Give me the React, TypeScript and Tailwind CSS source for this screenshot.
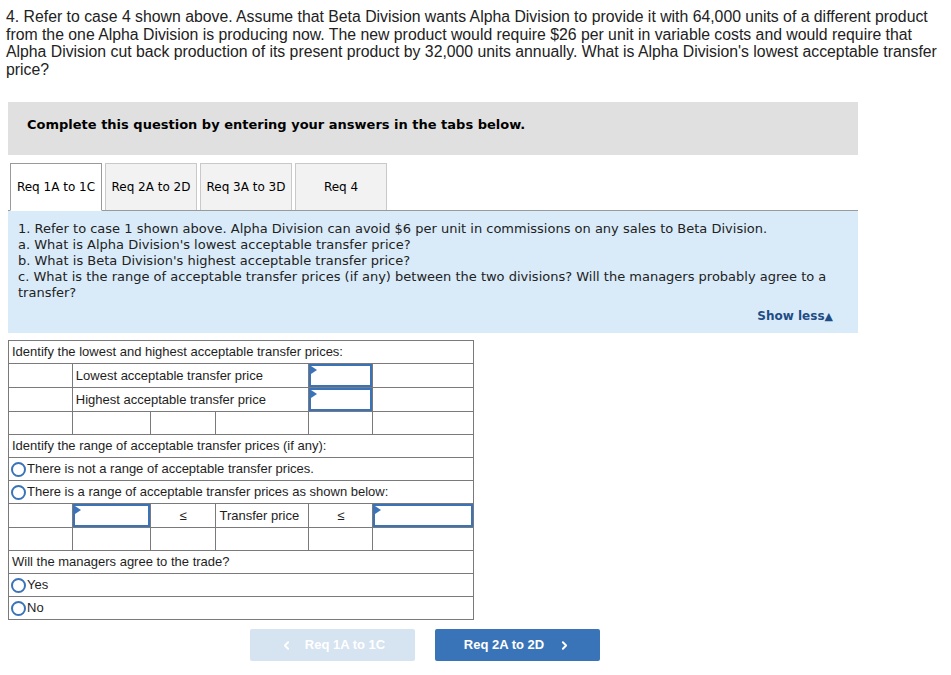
import type { ReactNode } from 'react';
import { ChevronLeft, ChevronRight } from 'lucide-react';

const tabs = ['Req 1A to 1C', 'Req 2A to 2D', 'Req 3A to 3D', 'Req 4'];

function AnswerBox() {
  return (
    <div className="relative h-[23px] w-full border-2 border-[#3b73b9] bg-white">
      <span className="absolute left-0 top-0 h-0 w-0 border-y-[4px] border-l-[6px] border-y-transparent border-l-[#3b73b9]" />
    </div>
  );
}

function Radio({ label }: { label: string }) {
  return (
    <div className="flex items-center">
      <span className="ml-[2px] mr-[1px] inline-block h-[15px] w-[15px] rounded-full border-2 border-[#3b73b9] bg-white" />
      <span>{label}</span>
    </div>
  );
}

function Cell({ children, className = '', colSpan }: { children?: ReactNode; className?: string; colSpan?: number }) {
  return (
    <td colSpan={colSpan} className={`h-[23px] border border-[#7a7a7a] p-0 ${className}`}>
      {children}
    </td>
  );
}

function EmptyRow() {
  return (
    <tr>
      <Cell />
      <Cell />
      <Cell />
      <Cell />
      <Cell />
      <Cell />
    </tr>
  );
}

export default function App() {
  return (
    <div className="min-h-[675px] w-[951px] bg-white text-[#1a1a1a]">
      <p className="px-[6px] pt-[8px] text-[15.8px] leading-[17.5px] text-[#222] [font-family:'Liberation_Sans',Arial,sans-serif]">
        <span className="whitespace-nowrap">4. Refer to case 4 shown above. Assume that Beta Division wants Alpha Division to provide it with 64,000 units of a different product</span>
        <br />
        <span className="whitespace-nowrap">from the one Alpha Division is producing now. The new product would require $26 per unit in variable costs and would require that</span>
        <br />
        <span className="whitespace-nowrap">Alpha Division cut back production of its present product by 32,000 units annually. What is Alpha Division's lowest acceptable transfer</span>
        <br />
        price?
      </p>

      <div className="ml-[8px] mt-[24px] w-[850px]">
        <div className="flex h-[53px] items-center bg-[#e0e0e0] pb-[7px] pl-[19px] text-[13px] font-bold text-black [font-family:'DejaVu_Sans',Verdana,sans-serif]">
          Complete this question by entering your answers in the tabs below.
        </div>

        <div className="mt-[8px] flex h-[48px] items-end border-b border-[#9a9a9a] pl-[2px] [font-family:'DejaVu_Sans',Verdana,sans-serif] text-[12px]">
          {tabs.map((t, i) => (
            <div
              key={t}
              className={`mr-[3px] flex w-[92px] items-center justify-center border text-black ${
                i === 0
                  ? '-mb-px h-[48px] border-[#9a9a9a] border-b-white bg-white'
                  : 'h-[47px] border-[#c9c9c9] border-b-0 bg-[#f2f2f2]'
              }`}
            >
              {t}
            </div>
          ))}
        </div>

        <div className="relative h-[122px] bg-[#d9ebf9] px-[10px] pt-[10px] text-[13px] leading-[16px] text-[#222] [font-family:'DejaVu_Sans',Verdana,sans-serif]">
          <p>1. Refer to case 1 shown above. Alpha Division can avoid $6 per unit in commissions on any sales to Beta Division.</p>
          <p>a. What is Alpha Division's lowest acceptable transfer price?</p>
          <p>b. What is Beta Division's highest acceptable transfer price?</p>
          <p>c. What is the range of acceptable transfer prices (if any) between the two divisions? Will the managers probably agree to a transfer?</p>
          <div className="absolute bottom-[8px] right-[25px] text-[12px] font-bold text-[#1f4d85]">
            Show less<span className="text-[11px]">▲</span>
          </div>
        </div>
      </div>

      <table className="ml-[8px] mt-[7px] w-[466px] border-collapse text-[13px] text-[#1e1e1e] [font-family:'Liberation_Sans',Arial,sans-serif]">
        <colgroup>
          <col className="w-[64px]" />
          <col className="w-[78px]" />
          <col className="w-[66px]" />
          <col className="w-[93px]" />
          <col className="w-[64px]" />
          <col className="w-[101px]" />
        </colgroup>
        <tbody>
          <tr>
            <Cell colSpan={6} className="pl-[3px]">Identify the lowest and highest acceptable transfer prices:</Cell>
          </tr>
          <tr>
            <Cell />
            <Cell colSpan={3} className="pl-[3px]">Lowest acceptable transfer price</Cell>
            <Cell><AnswerBox /></Cell>
            <Cell />
          </tr>
          <tr>
            <Cell />
            <Cell colSpan={3} className="pl-[3px]">Highest acceptable transfer price</Cell>
            <Cell><AnswerBox /></Cell>
            <Cell />
          </tr>
          <EmptyRow />
          <tr>
            <Cell colSpan={6} className="pl-[3px]">Identify the range of acceptable transfer prices (if any):</Cell>
          </tr>
          <tr>
            <Cell colSpan={6}><Radio label="There is not a range of acceptable transfer prices." /></Cell>
          </tr>
          <tr>
            <Cell colSpan={6}><Radio label="There is a range of acceptable transfer prices as shown below:" /></Cell>
          </tr>
          <tr>
            <Cell />
            <Cell><AnswerBox /></Cell>
            <Cell className="text-center">≤</Cell>
            <Cell className="pl-[3px]">Transfer price</Cell>
            <Cell className="text-center">≤</Cell>
            <Cell><AnswerBox /></Cell>
          </tr>
          <EmptyRow />
          <tr>
            <Cell colSpan={6} className="pl-[3px]">Will the managers agree to the trade?</Cell>
          </tr>
          <tr>
            <Cell colSpan={6}><Radio label="Yes" /></Cell>
          </tr>
          <tr>
            <Cell colSpan={6}><Radio label="No" /></Cell>
          </tr>
        </tbody>
      </table>

      <div className="mt-[9px] flex gap-[20px] pl-[250px] text-[13px] font-bold text-white [font-family:'Liberation_Sans',Arial,sans-serif]">
        <button type="button" className="flex h-[32px] w-[165px] items-center justify-center gap-[12px] rounded-[2px] bg-[#d6e3f1]">
          <ChevronLeft size={13} strokeWidth={3.5} />
          <span>Req 1A to 1C</span>
        </button>
        <button type="button" className="flex h-[32px] w-[165px] items-center justify-center gap-[14px] rounded-[2px] bg-[#3a74b8]">
          <span>Req 2A to 2D</span>
          <ChevronRight size={13} strokeWidth={3.5} />
        </button>
      </div>
    </div>
  );
}
